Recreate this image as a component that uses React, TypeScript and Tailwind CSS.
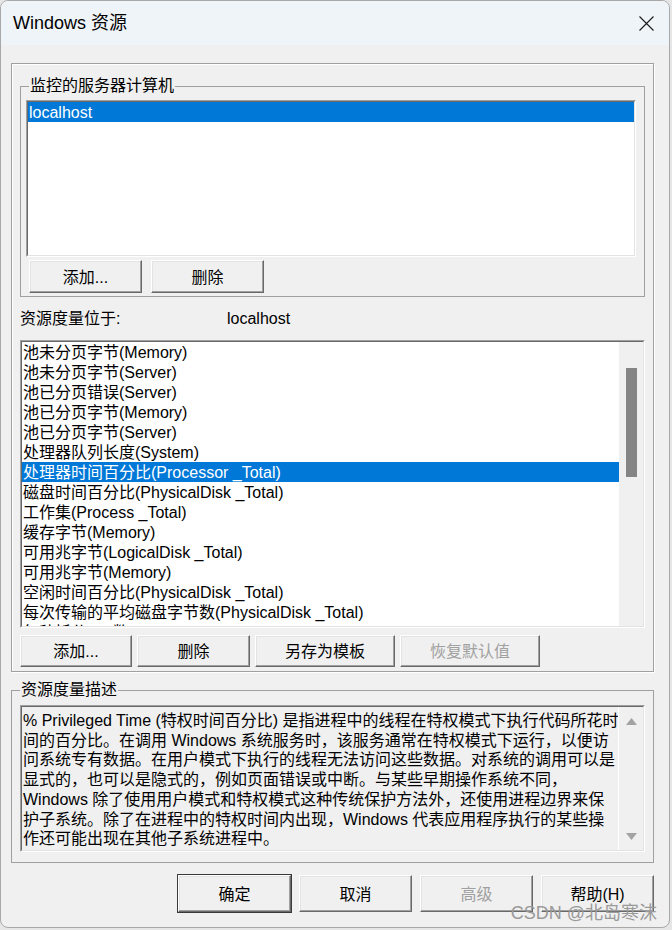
import clsx from 'clsx';
import type { ReactNode } from 'react';

const counters = [
  '池未分页字节(Memory)',
  '池未分页字节(Server)',
  '池已分页错误(Server)',
  '池已分页字节(Memory)',
  '池已分页字节(Server)',
  '处理器队列长度(System)',
  '处理器时间百分比(Processor _Total)',
  '磁盘时间百分比(PhysicalDisk _Total)',
  '工作集(Process _Total)',
  '缓存字节(Memory)',
  '可用兆字节(LogicalDisk _Total)',
  '可用兆字节(Memory)',
  '空闲时间百分比(PhysicalDisk _Total)',
  '每次传输的平均磁盘字节数(PhysicalDisk _Total)',
  '每秒拆分 IO 数(PhysicalDisk _Total)',
];

const description = [
  '% Privileged Time (特权时间百分比) 是指进程中的线程在特权模式下执行代码所花时',
  '间的百分比。在调用 Windows 系统服务时，该服务通常在特权模式下运行，以便访',
  '问系统专有数据。在用户模式下执行的线程无法访问这些数据。对系统的调用可以是',
  '显式的，也可以是隐式的，例如页面错误或中断。与某些早期操作系统不同，',
  'Windows 除了使用用户模式和特权模式这种传统保护方法外，还使用进程边界来保',
  '护子系统。除了在进程中的特权时间内出现，Windows 代表应用程序执行的某些操',
  '作还可能出现在其他子系统进程中。',
];

// classic raised push button
function Btn({ children, className, disabled, isDefault }: { children: ReactNode; className: string; disabled?: boolean; isDefault?: boolean }) {
  return (
    <div
      className={clsx(
        'flex items-center justify-center pt-[2px] bg-[#f0f0f0] text-[16px] border border-t-white border-l-white border-b-[#696969] border-r-[#696969] shadow-[inset_-1px_-1px_0_#a0a0a0,inset_1px_1px_0_#e3e3e3]',
        disabled ? 'text-[#a0a0a0]' : 'text-black',
        isDefault && 'ring-1 ring-[#3a3a3a]',
        className,
      )}
    >
      {children}
    </div>
  );
}

// sunken 3D frame used by list boxes and the text box
function Sunken({ children, className }: { children: ReactNode; className: string }) {
  return (
    <div className={clsx('border border-t-[#a0a0a0] border-l-[#a0a0a0] border-b-white border-r-white', className)}>
      <div className="h-full border border-t-[#696969] border-l-[#696969] border-b-[#e3e3e3] border-r-[#e3e3e3]">{children}</div>
    </div>
  );
}

export default function App() {
  return (
    <div className="w-[672px] h-[930px] bg-[#e6e6e6] font-['Liberation_Sans','Noto_Sans_CJK_SC',sans-serif] text-black">
      <div className="w-[670px] h-[928px] rounded-[8px] overflow-hidden border border-[#a8a8a8] bg-[#f0f0f0]">
        {/* title bar */}
        <div className="h-[44px] bg-[#eff4f9] flex items-center justify-between pl-[12px] pr-[15px]">
          <span className="text-[18px]">Windows 资源</span>
          <svg width="15" height="15" viewBox="0 0 15 15" className="text-[#1a1a1a]">
            <path d="M0.5 0.5 L14.5 14.5 M14.5 0.5 L0.5 14.5" stroke="currentColor" strokeWidth="1.1" />
          </svg>
        </div>

        {/* counters panel */}
        <div className="ml-[10px] mt-[18px] w-[643px] h-[609px] border border-[#a0a0a0] shadow-[inset_1px_1px_0_#fff,1px_1px_0_#fff] pt-[11px] pl-[8px]">
          <fieldset className="w-[625px] h-[222px] border border-[#a0a0a0] pb-[3px]">
            <legend className="ml-[8px] px-[1px] text-[16px] leading-[22px]">监控的服务器计算机</legend>
            <Sunken className="ml-[5px] mt-[3px] w-[610px] h-[157px] bg-white">
              <div className="h-[20px] leading-[22px] bg-[#0078d7] text-white text-[16px] pl-[1px]">localhost</div>
            </Sunken>
            <div className="flex gap-[9px] ml-[8px] mt-[3px]">
              <Btn className="w-[113px] h-[33px]">添加...</Btn>
              <Btn className="w-[113px] h-[33px]">删除</Btn>
            </div>
          </fieldset>

          <div className="mt-[11px] flex h-[20px] text-[16px] leading-[22px]">
            <span className="w-[207px]">资源度量位于:</span>
            <span>localhost</span>
          </div>

          <Sunken className="mt-[12px] w-[625px] h-[288px] bg-white">
            <div className="flex h-full">
              <div className="flex-1 overflow-hidden">
                {counters.map((c, i) => (
                  <div
                    key={c}
                    className={clsx('h-[20px] leading-[22px] text-[16px] pl-[1px] whitespace-nowrap', i === 6 && 'bg-[#0078d7] text-white')}
                  >
                    {c}
                  </div>
                ))}
              </div>
              <div className="w-[24px] bg-[#f0f0f0] pt-[26px] pl-[7px]">
                <div className="w-[11px] h-[109px] bg-[#858585]" />
              </div>
            </div>
          </Sunken>

          <div className="mt-[7px] flex gap-[5px]">
            <Btn className="w-[112px] h-[32px]">添加...</Btn>
            <Btn className="w-[113px] h-[32px]">删除</Btn>
            <Btn className="w-[140px] h-[32px]">另存为模板</Btn>
            <Btn className="w-[140px] h-[32px]" disabled>恢复默认值</Btn>
          </div>
        </div>

        {/* description */}
        <fieldset className="ml-[10px] mt-[8px] w-[643px] h-[183px] border border-[#a0a0a0] pb-[10px]">
          <legend className="ml-[8px] px-[1px] text-[16px] leading-[20px]">资源度量描述</legend>
          <Sunken className="ml-[8px] mt-[5px] w-[625px] h-[147px] bg-[#f0f0f0]">
            <div className="flex h-full">
              <div className="flex-1 overflow-hidden pt-[4px] pl-[1px] text-[16px] leading-[19.7px]">
                {description.map((l) => (
                  <div key={l} className="whitespace-nowrap">{l}</div>
                ))}
              </div>
              <div className="w-[25px] border-l border-white flex flex-col items-center justify-between pt-[11px] pb-[10px]">
                <svg width="11" height="7" viewBox="0 0 11 7"><path d="M5.5 0 L11 7 L0 7 Z" fill="#a3a3a3" /></svg>
                <svg width="11" height="7" viewBox="0 0 11 7"><path d="M0 0 L11 0 L5.5 7 Z" fill="#a3a3a3" /></svg>
              </div>
            </div>
          </Sunken>
        </fieldset>

        {/* dialog buttons */}
        <div className="relative mt-[12px] flex justify-end gap-[8px] pr-[15px]">
          <Btn className="w-[113px] h-[37px]" isDefault>确定</Btn>
          <Btn className="w-[113px] h-[37px]">取消</Btn>
          <Btn className="w-[113px] h-[37px]" disabled>高级</Btn>
          <Btn className="w-[113px] h-[37px]">帮助(H)</Btn>
          <span className="absolute right-[12px] top-[28px] text-[18px] leading-[20px] text-[#9a9a9a]">CSDN @北岛寒沫</span>
        </div>
      </div>
    </div>
  );
}
